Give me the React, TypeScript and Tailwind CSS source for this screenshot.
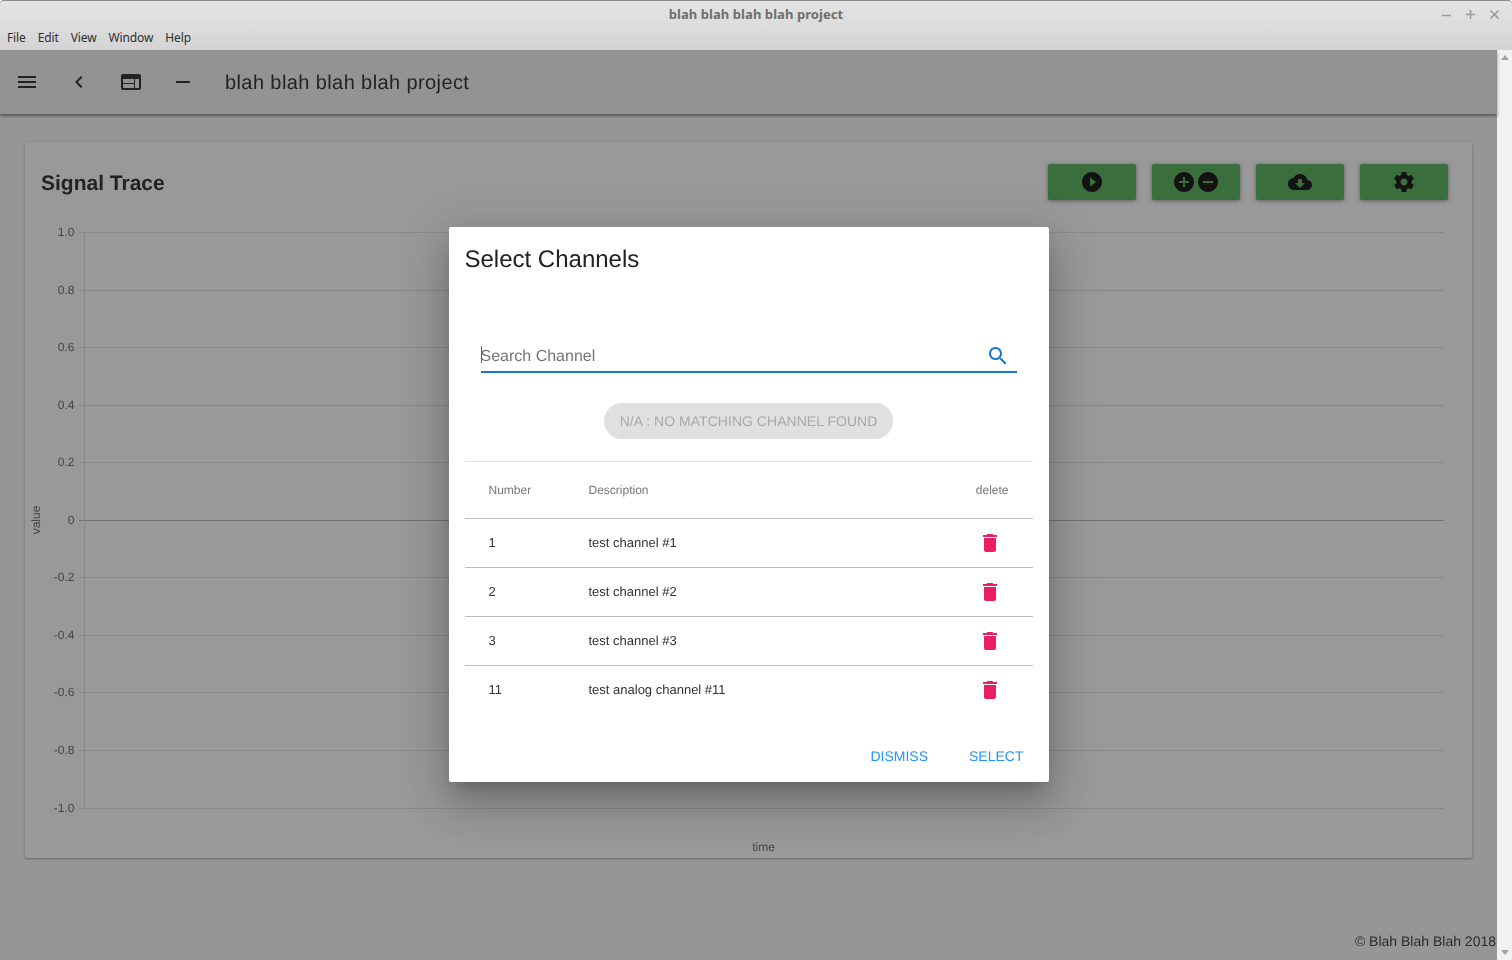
const sans = "font-['Liberation_Sans',Arial,sans-serif]";

const icons = {
  menu: "M3 18h18v-2H3v2zm0-5h18v-2H3v2zm0-7v2h18V6H3z",
  back: "M15.41 7.41L14 6l-6 6 6 6 1.41-1.41L10.83 12z",
  web: "M20 4H4c-1.1 0-1.99.9-1.99 2L2 18c0 1.1.9 2 2 2h16c1.1 0 2-.9 2-2V6c0-1.1-.9-2-2-2zm-5 14H4v-4h11v4zm0-5H4V9h11v4zm5 5h-4V9h4v9z",
  remove: "M19 13H5v-2h14v2z",
  play: "M12 2C6.48 2 2 6.48 2 12s4.48 10 10 10 10-4.48 10-10S17.52 2 12 2zm-2 14.5v-9l6 4.5-6 4.5z",
  addCircle: "M12 2C6.48 2 2 6.48 2 12s4.48 10 10 10 10-4.48 10-10S17.52 2 12 2zm5 11h-4v4h-2v-4H7v-2h4V7h2v4h4v2z",
  removeCircle: "M12 2C6.48 2 2 6.48 2 12s4.48 10 10 10 10-4.48 10-10S17.52 2 12 2zm5 11H7v-2h10v2z",
  cloud: "M19.35 10.04C18.67 6.59 15.64 4 12 4 9.11 4 6.6 5.64 5.35 8.04 2.34 8.36 0 10.91 0 14c0 3.31 2.69 6 6 6h13c2.76 0 5-2.24 5-5 0-2.64-2.05-4.78-4.65-4.96zM17 13l-5 5-5-5h3V9h4v4h3z",
  settings: "M19.43 12.98c.04-.32.07-.64.07-.98s-.03-.66-.07-.98l2.11-1.65c.19-.15.24-.42.12-.64l-2-3.46c-.12-.22-.39-.3-.61-.22l-2.49 1c-.52-.4-1.08-.73-1.69-.98l-.38-2.65C14.46 2.18 14.25 2 14 2h-4c-.25 0-.46.18-.49.42l-.38 2.65c-.61.25-1.17.59-1.69.98l-2.49-1c-.23-.09-.49 0-.61.22l-2 3.46c-.13.22-.07.49.12.64l2.11 1.65c-.04.32-.07.65-.07.98s.03.66.07.98l-2.11 1.65c-.19.15-.24.42-.12.64l2 3.46c.12.22.39.3.61.22l2.49-1c.52.4 1.08.73 1.69.98l.38 2.65c.03.24.24.42.49.42h4c.25 0 .46-.18.49-.42l.38-2.65c.61-.25 1.17-.59 1.69-.98l2.49 1c.23.09.49 0 .61-.22l2-3.46c.12-.22.07-.49-.12-.64l-2.11-1.65zM12 15.5c-1.93 0-3.5-1.57-3.5-3.5s1.57-3.5 3.5-3.5 3.5 1.57 3.5 3.5-1.57 3.5-3.5 3.5z",
  search: "M15.5 14h-.79l-.28-.27C15.41 12.59 16 11.11 16 9.5 16 5.91 13.09 3 9.5 3S3 5.91 3 9.5 5.91 16 9.5 16c1.61 0 3.09-.59 4.23-1.57l.27.28v.79l5 4.99L20.49 19l-4.99-5zm-6 0C7.01 14 5 11.99 5 9.5S7.01 5 9.5 5 14 7.01 14 9.5 11.99 14 9.5 14z",
  trash: "M6 19c0 1.1.9 2 2 2h8c1.1 0 2-.9 2-2V7H6v12zM19 4h-3.5l-1-1h-5l-1 1H5v2h14V4z",
};

function Icon({ d, className }: { d: string; className?: string }) {
  return (
    <svg viewBox="0 0 24 24" className={className} fill="currentColor">
      <path d={d} />
    </svg>
  );
}

const ticks = ["1.0", "0.8", "0.6", "0.4", "0.2", "0", "-0.2", "-0.4", "-0.6", "-0.8", "-1.0"];

function Chart() {
  return (
    <svg width="1447" height="716" viewBox="0 0 1447 716" className="block" fontFamily="'Liberation Sans', Arial, sans-serif">
      {ticks.map((t, i) => {
        const y = Math.round(90 + i * 57.55) + 0.5;
        return (
          <g key={t}>
            <line x1="54" x2="1419" y1={y} y2={y} stroke={t === "0" ? "#bdbdbd" : "#e3e3e3"} />
            <text x="49.5" y={y + 3.5} textAnchor="end" fontSize="12" fill="#707070">{t}</text>
          </g>
        );
      })}
      <line x1="59.5" x2="59.5" y1="90" y2="666" stroke="#e3e3e3" />
      <text transform="translate(15 378) rotate(-90)" textAnchor="middle" fontSize="12" fill="#707070">value</text>
      <text x="738.5" y="709" textAnchor="middle" fontSize="12" fill="#707070">time</text>
    </svg>
  );
}

const rows = [
  { no: "1", name: "test channel #1" },
  { no: "2", name: "test channel #2" },
  { no: "3", name: "test channel #3" },
  { no: "11", name: "test analog channel #11" },
];

export default function App() {
  return (
    <div className={`h-[960px] w-[1512px] overflow-hidden flex flex-col ${sans}`}>
      {/* window chrome */}
      <div className="h-[50px] shrink-0 flex flex-col border-t border-[#8c8c8c] bg-gradient-to-b from-[#e4e4e4] to-[#d4d4d4] rounded-t-[4px] font-['Noto_Sans',sans-serif]">
        <div className="relative h-[27px] flex items-center justify-center text-[13px] tracking-[0.07px] font-bold text-[#6f6f6f]">
          blah blah blah blah project
          <div className="absolute right-[12px] top-[8px] flex gap-[13px] text-[#999999]">
            <svg width="11" height="11" viewBox="0 0 11 11"><path d="M1 6.5h9" stroke="currentColor" strokeWidth="1.5" /></svg>
            <svg width="11" height="11" viewBox="0 0 11 11"><path d="M1 5.5h9M5.5 1v9" stroke="currentColor" strokeWidth="1.5" /></svg>
            <svg width="11" height="11" viewBox="0 0 11 11"><path d="M1.5 1.5l8 8M9.5 1.5l-8 8" stroke="currentColor" strokeWidth="1.6" /></svg>
          </div>
        </div>
        <div className="flex gap-3 pl-[7px] text-[12px] leading-[20px] tracking-[-0.12px] text-[#2e2e2e]">
          <span>File</span>
          <span>Edit</span>
          <span>View</span>
          <span>Window</span>
          <span>Help</span>
        </div>
      </div>

      <div className="flex flex-1 min-h-0">
        <div className="flex-1 min-w-0 bg-[#fafafa]">
          <div className="relative h-full flex flex-col [text-rendering:geometricPrecision] [will-change:transform]">
            {/* toolbar */}
            <div className="h-16 shrink-0 bg-[#f5f5f5] shadow-[0_2px_3px_rgba(0,0,0,0.45)] flex items-center text-[#3a3a3a]">
              <Icon d={icons.menu} className="w-6 h-6 ml-[15px]" />
              <Icon d={icons.back} className="w-6 h-6 ml-7" />
              <Icon d={icons.web} className="w-6 h-6 ml-7" />
              <Icon d={icons.remove} className="w-6 h-6 ml-7" />
              <h1 className="mt-[2px] ml-[30px] text-xl tracking-[0.4px]">blah blah blah blah project</h1>
            </div>

            {/* signal card */}
            <div className="mx-[25px] mt-7 h-[716px] bg-white rounded-[2px] shadow-[0_1px_3px_rgba(0,0,0,0.35)]">
              <div className="flex items-center justify-between pt-[22px] pl-4 pr-6">
                <h2 className="mt-[4px] text-[21px] font-bold text-[#3a3a3a]">Signal Trace</h2>
                <div className="flex gap-4 text-[#212121]">
                  <button className="w-[88px] h-9 rounded-[2px] bg-[#63b866] shadow-[0_1px_4px_rgba(0,0,0,0.4)] flex items-center justify-center">
                    <Icon d={icons.play} className="w-6 h-6" />
                  </button>
                  <button className="w-[88px] h-9 rounded-[2px] bg-[#63b866] shadow-[0_1px_4px_rgba(0,0,0,0.4)] flex items-center justify-center">
                    <Icon d={icons.addCircle} className="w-6 h-6" />
                    <Icon d={icons.removeCircle} className="w-6 h-6" />
                  </button>
                  <button className="w-[88px] h-9 rounded-[2px] bg-[#63b866] shadow-[0_1px_4px_rgba(0,0,0,0.4)] flex items-center justify-center">
                    <Icon d={icons.cloud} className="w-6 h-6" />
                  </button>
                  <button className="w-[88px] h-9 rounded-[2px] bg-[#63b866] shadow-[0_1px_4px_rgba(0,0,0,0.4)] flex items-center justify-center">
                    <Icon d={icons.settings} className="w-6 h-6" />
                  </button>
                </div>
              </div>
              <div className="-mt-[58px]">
                <Chart />
              </div>
            </div>

            <div className="mt-auto mb-[9px] pr-[1px] text-right text-sm text-[#4a4a4a]">© Blah Blah Blah 2018</div>

            {/* dialog */}
            <div className="absolute inset-0 pb-[1px] bg-black/40 flex items-center justify-center">
              <div className="w-[600px] h-[555px] bg-white rounded-[2px] shadow-[0_11px_15px_-7px_rgba(0,0,0,0.2),0_24px_38px_3px_rgba(0,0,0,0.14),0_9px_46px_8px_rgba(0,0,0,0.12)] flex flex-col pt-[17px] px-4">
                <h3 className="text-2xl leading-[32px] text-[#212121]">Select Channels</h3>
                <div className="mt-[64px] mx-4 h-[33px] border-b-2 border-[#1976d2] flex items-center relative">
                  <span className="absolute left-0 top-[6px] h-[17px] w-px bg-[#1976d2]" />
                  <span className="mt-[2px] text-base text-[#757575]">Search Channel</span>
                  <Icon d={icons.search} className="mt-[1px] w-6 h-6 ml-auto mr-[7px] text-[#1976d2]" />
                </div>
                <div className="mt-[30px] flex justify-center">
                  <div className="h-9 w-[289px] rounded-full bg-[#e0e0e0] flex items-center justify-center text-sm tracking-[0.03px] text-[#a8a8a8]">N/A : NO MATCHING CHANNEL FOUND</div>
                </div>
                <table className="mt-[22px] w-full border-t border-[#e0e0e0] text-[13px] text-[#333333] table-fixed">
                  <thead>
                    <tr className="h-[57px] border-b border-[#bdbdbd] text-xs text-[#757575]">
                      <th className="w-[124px] pl-6 text-left font-normal">Number</th>
                      <th className="text-left font-normal">Description</th>
                      <th className="w-[84px] pr-6 text-right font-normal">delete</th>
                    </tr>
                  </thead>
                  <tbody>
                    {rows.map((r, i) => {
                      const last = i === rows.length - 1;
                      return (
                        <tr key={r.no} className={last ? "h-[49px]" : "h-[49px] border-b border-[#bdbdbd]"}>
                          <td className={last ? "pl-6 pb-[2px]" : "pl-6"}>{r.no}</td>
                          <td className={last ? "pb-[2px]" : ""}>{r.name}</td>
                          <td>
                            <Icon d={icons.trash} className="w-6 h-6 ml-[29.5px] text-[#e91e63]" />
                          </td>
                        </tr>
                      );
                    })}
                  </tbody>
                </table>
                <div className="mt-[31px] flex justify-end gap-[41px] pr-[9px] text-sm text-[#2196f3]">
                  <span>DISMISS</span>
                  <span>SELECT</span>
                </div>
              </div>
            </div>
          </div>
        </div>

        {/* scrollbar */}
        <div className="w-[15px] shrink-0 bg-[#f1f1f1] flex flex-col items-center justify-between py-[5px]">
          <svg width="8" height="5" viewBox="0 0 8 5"><path d="M0 5L4 0l4 5z" fill="#a3a3a3" /></svg>
          <svg width="8" height="5" viewBox="0 0 8 5"><path d="M0 0l4 5 4-5z" fill="#a3a3a3" /></svg>
        </div>
      </div>
    </div>
  );
}
